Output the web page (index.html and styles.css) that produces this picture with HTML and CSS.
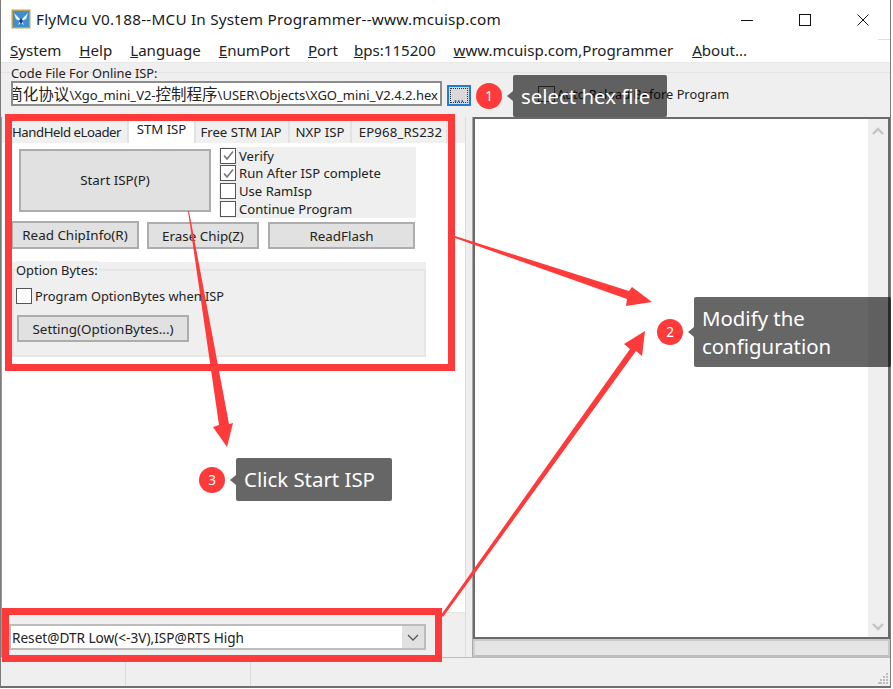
FILE: index.html
```html
<!DOCTYPE html>
<html lang="en">
<head>
<meta charset="utf-8">
<title>FlyMcu</title>
<link rel="stylesheet" href="styles.css">
</head>
<body>
<div class="window">
  <header class="titlebar">
    <svg class="app-icon" width="20" height="20" viewBox="0 0 20 20">
      <rect x="0.5" y="0.5" width="19" height="19" fill="#c4a052"/>
      <rect x="2" y="2" width="16" height="16" fill="#3d8fd0"/>
      <path d="M3 4 L10 11 L17 4 L15 10 L11 12 L13 16 L10 14 L7 16 L9 12 L5 10 Z" fill="#f2f7fb"/>
      <path d="M8 12 L10 9 L12 12 L10 15 Z" fill="#123c78"/>
    </svg>
    <span class="title-text">FlyMcu V0.188--MCU In System Programmer--www.mcuisp.com</span>
    <div class="win-buttons">
      <svg class="win-btn" width="12" height="12" viewBox="0 0 12 12"><path d="M0 6.5H12" stroke="#111" fill="none"/></svg>
      <svg class="win-btn" width="12" height="12" viewBox="0 0 12 12"><rect x="0.5" y="0.5" width="11" height="11" stroke="#111" fill="none"/></svg>
      <svg class="win-btn" width="12" height="12" viewBox="0 0 12 12"><path d="M0.5 0.5L11.5 11.5M11.5 0.5L0.5 11.5" stroke="#111" fill="none"/></svg>
    </div>
  </header>
  <nav class="menubar">
    <span class="m1"><u>S</u>ystem</span>
    <span class="m2"><u>H</u>elp</span>
    <span class="m3"><u>L</u>anguage</span>
    <span class="m4"><u>E</u>numPort</span>
    <span class="m5"><u>P</u>ort</span>
    <span class="m6"><u>b</u>ps:115200</span>
    <span class="m7"><u>w</u>ww.mcuisp.com,Programmer</span>
    <span class="m8"><u>A</u>bout...</span>
  </nav>
  <section class="filebar">
    <div class="file-label">Code File For Online ISP:</div>
    <div class="file-row">
      <div class="file-input"><span class="file-path"><span class="cjk">简化协议</span>\Xgo_mini_V2-<span class="cjk">控制程序</span>\USER\Objects\XGO_mini_V2.4.2.hex</span></div>
      <button class="browse"><span class="browse-inner">...</span></button>
      <span class="reload-box"></span>
      <span class="reload-text">Auto Reload Before Program</span>
    </div>
  </section>
  <main class="main">
    <section class="left">
      <div class="tabs">
        <span class="tab tab-a">HandHeld eLoader</span>
        <span class="tab tab-b active">STM ISP</span>
        <span class="tab tab-c">Free STM IAP</span>
        <span class="tab tab-d">NXP ISP</span>
        <span class="tab tab-e">EP968_RS232</span>
      </div>
      <div class="tab-body">
        <div class="start-row">
          <button class="btn start">Start ISP(P)</button>
          <div class="checks">
            <label class="check-row"><span class="box on"><svg width="13" height="13" viewBox="0 0 13 13"><path d="M2 6.5L5 10L11 2.5" fill="none" stroke="#777" stroke-width="1.6"/></svg></span>Verify</label>
            <label class="check-row"><span class="box on"><svg width="13" height="13" viewBox="0 0 13 13"><path d="M2 6.5L5 10L11 2.5" fill="none" stroke="#777" stroke-width="1.6"/></svg></span>Run After ISP complete</label>
            <label class="check-row"><span class="box"></span>Use RamIsp</label>
            <label class="check-row"><span class="box"></span>Continue Program</label>
          </div>
        </div>
        <div class="btn-row">
          <button class="btn read">Read ChipInfo(R)</button>
          <button class="btn erase">Erase Chip(Z)</button>
          <button class="btn flash">ReadFlash</button>
        </div>
        <fieldset class="options">
          <div class="options-title"><span class="options-label">Option Bytes:</span></div>
          <label class="check-row opt-check"><span class="box"></span>Program OptionBytes when ISP</label>
          <button class="btn setting">Setting(OptionBytes...)</button>
        </fieldset>
      </div>
      <div class="combo-bar">
        <div class="combo">
          <span class="combo-text">Reset@DTR Low(&lt;-3V),ISP@RTS High</span>
          <span class="combo-arrow"><svg width="12" height="7" viewBox="0 0 12 7"><path d="M1 1L6 6L11 1" fill="none" stroke="#555" stroke-width="1.3"/></svg></span>
        </div>
      </div>
    </section>
    <div class="splitter"></div>
    <section class="right">
      <div class="memo">
        <div class="memo-body"></div>
        <div class="scrollbar">
          <svg width="12" height="8" viewBox="0 0 12 8"><path d="M1 7L6 2L11 7" fill="none" stroke="#c4c4c4" stroke-width="2.4"/></svg>
          <svg width="12" height="8" viewBox="0 0 12 8"><path d="M1 1L6 6L11 1" fill="none" stroke="#c4c4c4" stroke-width="2.4"/></svg>
        </div>
      </div>
      <div class="hbar"></div>
    </section>
  </main>
  <footer class="status">
    <span class="cell c1"></span>
    <span class="cell c2"></span>
    <svg class="grip" width="12" height="12" viewBox="0 0 12 12" fill="#bdbdbd"><rect x="8" y="0" width="2" height="2"/><rect x="5" y="3" width="2" height="2"/><rect x="8" y="3" width="2" height="2"/><rect x="2" y="6" width="2" height="2"/><rect x="5" y="6" width="2" height="2"/><rect x="8" y="6" width="2" height="2"/><rect x="0" y="9" width="2" height="2"/><rect x="2" y="9" width="2" height="2"/><rect x="5" y="9" width="2" height="2"/><rect x="8" y="9" width="2" height="2"/></svg>
  </footer>
</div>

<svg class="arrows" width="893" height="689" viewBox="0 0 893 689">
  <g fill="#ff3a3a">
    <path d="M455 236 L629 291 L632 287 L652 302 L626 306 L627 299 L455 238 Z"/>
    <path d="M441 615 L630 349 L624 344 L645 331 L642 356 L636 351 L443 617 Z"/>
    <path d="M188 211 L189 211 L229 424 L233 423 L227 447 L213 427 L219 425 Z"/>
  </g>
</svg>

<div class="box-red box-config"></div>
<div class="box-red box-combo"></div>

<div class="note note1"><span class="num">1</span><span class="tip tip1">select hex file</span></div>
<div class="note note2"><span class="num">2</span><span class="tip tip2">Modify the configuration</span></div>
<div class="note note3"><span class="num">3</span><span class="tip tip3">Click Start ISP</span></div>
</body>
</html>
```
FILE: styles.css
```css
* { box-sizing: border-box; }
html, body { margin: 0; padding: 0; background: #fff; }
body { width: 893px; height: 689px; position: relative; overflow: hidden; font-family: "Noto Sans", "Noto Sans CJK SC", sans-serif; color: #222; }

.window { width: 891px; height: 688px; border: 1px solid #7a7a7a; border-top: 0; border-bottom: 2px solid #6f6f6f; display: flex; flex-direction: column; background: #efefef; }

.titlebar { height: 38px; background: #fff; display: flex; align-items: center; padding-left: 10px; flex: none; }
.app-icon { flex: none; margin-top: -1px; }
.title-text { margin-left: 5px; font-size: 15.3px; color: #1a1a1a; white-space: nowrap; letter-spacing: 0.2px; }
.win-buttons { margin-left: auto; display: flex; gap: 46px; padding-right: 21px; margin-top: 2px; }
.win-btn { display: block; }

.menubar { height: 24px; background: #fff; flex: none; display: flex; align-items: center; padding-left: 9px; font-size: 15.1px; color: #222; white-space: nowrap; position: relative; }
.menubar::after { content: ""; position: absolute; right: 0; top: 1px; width: 12px; height: 1px; background: #dedede; }
.menubar u { text-underline-offset: 1px; }
.m2, .m3, .m4, .m5, .m7 { margin-left: 18px; }
.m6 { margin-left: 16px; }
.m8 { margin-left: 19px; }

.filebar { height: 55px; flex: none; border-top: 1px solid #e8e8e8; padding: 2px 0 0 10px; background: #efefef; position: relative; }
.filebar::before { content: ""; position: absolute; left: 0; right: 0; top: 9px; height: 1px; background: #e4e4e4; }
.file-label { font-size: 12.8px; line-height: 16px; color: #222; position: relative; }
.file-row { display: flex; align-items: center; height: 25px; font-size: 12.8px; position: relative; }
.file-input { width: 431px; height: 25px; border: 2px solid #8c8c8c; background: #fff; overflow: hidden; display: flex; justify-content: flex-end; align-items: center; padding-right: 2px; flex: none; }
.file-path { white-space: nowrap; font-size: 13px; color: #222; flex: none; }
.cjk { font-size: 15.5px; }
.browse { margin: 4px 0 0 5px; align-self: flex-start; width: 24px; height: 21px; padding: 0; border: 2px solid #1d7fd3; background: #d9d9d9; flex: none; display: flex; }
.browse-inner { flex: 1; margin: 1px; border: 1px dotted #333; color: #2b3f8c; font: 700 10px/18px "Noto Sans", sans-serif; text-align: center; letter-spacing: 0.5px; }
.reload-box { margin-left: 67px; width: 17px; height: 16px; border: 1px solid #555; background: #efefef; flex: none; }
.reload-text { margin-left: 2px; white-space: nowrap; }

.main { flex: 1; min-height: 0; display: flex; }
.left { width: 464px; flex: none; display: flex; flex-direction: column; background: #efefef; border-left: 1px solid #9a9a9a; }
.tabs { display: flex; height: 26px; padding: 2px 0 0 9px; align-items: flex-end; background: #efefef; font-size: 13.2px; flex: none; }
.tab { height: 23px; line-height: 22px; text-align: center; white-space: nowrap; background: #f0f0f0; border: 1px solid #e2e2e2; border-bottom: 0; }
.tab.active { height: 25px; background: #fff; line-height: 21px; }
.tab-a { width: 117px; padding-right: 7px; letter-spacing: -0.45px; }
.tab-b { width: 67px; }
.tab-c { width: 94px; padding-right: 2px; }
.tab-d { width: 62px; }
.tab-e { width: 96px; padding-left: 3px; letter-spacing: 0.15px; }

.tab-body { flex: 1; min-height: 0; background: #fff; padding: 5px 0 0 10px; border-bottom: 1px solid #e4e4e4; }
.btn { font-family: inherit; font-size: 13.4px; color: #222; background: #e1e1e1; border: 2px solid #adadad; padding: 0; white-space: nowrap; display: block; }
.start-row { display: flex; height: 70px; }
.start { width: 192px; height: 63px; margin: 1px 0 0 7px; padding-bottom: 2px; flex: none; }
.checks { margin: -1px 0 0 8px; width: 197px; height: 71px; background: #efefef; font-size: 13.1px; }
.check-row { display: flex; align-items: center; height: 17.6px; white-space: nowrap; }
.box { width: 16px; height: 16px; border: 1px solid #555; background: #fff; margin-right: 3px; flex: none; display: flex; align-items: center; justify-content: center; }
.checks .box { margin-left: 1px; }
.btn-row { display: flex; margin-top: 3px; height: 28px; }
.read { width: 128px; height: 28px; margin-left: -1px; }
.erase { width: 112px; height: 27px; margin: 1px 0 0 8px; }
.flash { width: 147px; height: 27px; margin: 1px 0 0 9px; }
.options { margin: 13px 0 0 0; padding: 0; width: 414px; height: 95px; background: #efefef; border: 0; position: relative; }
.options-title { font-size: 12.9px; line-height: 16px; padding-left: 4px; position: relative; z-index: 1; }
.options-label { background: #efefef; }
.options::after { content: ""; position: absolute; left: 0; right: 0; top: 7px; bottom: 0; border: 2px solid #e6e6e6; pointer-events: none; }
.opt-check { font-size: 12.8px; margin: 10px 0 0 4px; height: 16px; position: relative; z-index: 1; }
.setting { width: 172px; height: 27px; margin: 11px 0 0 5px; position: relative; z-index: 1; }

.combo-bar { height: 44px; background: #efefef; flex: none; padding: 11px 0 0 7px; }
.combo { width: 417px; height: 26px; border: 2px solid #bcbcbc; background: #fff; display: flex; align-items: center; font-size: 13.6px; }
.combo-text { flex: 1; padding-left: 1px; white-space: nowrap; }
.combo-arrow { width: 22px; height: 100%; background: #e1e1e1; display: flex; align-items: center; justify-content: center; }

.splitter { width: 8px; flex: none; background: #efefef; border-left: 1px solid #dcdcdc; border-right: 1px solid #a9a9a9; }
.right { flex: 1; display: flex; flex-direction: column; min-width: 0; }
.memo { flex: 1; min-height: 0; display: flex; border: 2px solid #6a6a6a; background: #fff; }
.memo-body { flex: 1; }
.scrollbar { width: 20px; background: #efefef; display: flex; flex-direction: column; justify-content: space-between; align-items: center; padding: 8px 0 6px; }
.scrollbar svg { display: block; }
.hbar { height: 18px; flex: none; background: #e5e5e5; border: 2px solid #bdbdbd; border-top-color: #c9c9c9; border-left-color: #d0d0d0; border-right-color: #c9c9c9; }

.status { height: 29px; flex: none; display: flex; background: #efefef; border-top: 1px solid #bdbdbd; }
.cell { display: block; height: 100%; border-right: 1px solid #dcdcdc; flex: none; }
.c1 { width: 125px; }
.c2 { width: 125px; }
.grip { margin-left: auto; margin-top: 15px; }

.arrows { position: absolute; left: 0; top: 0; pointer-events: none; }
.box-red { position: absolute; border: 7px solid #ff3a3a; pointer-events: none; }
.box-config { left: 5px; top: 114px; width: 450px; height: 257px; }
.box-combo { left: 2px; top: 608px; width: 440px; height: 54px; }

.note { position: absolute; display: flex; align-items: center; }
.num { width: 26px; height: 26px; border-radius: 50%; background: #ff3a3a; color: #fff; font-size: 13.5px; line-height: 26px; text-align: center; flex: none; }
.tip { position: relative; background: rgba(0, 0, 0, 0.6); color: #fff; border-radius: 2px; margin-left: 11px; font-size: 20.4px; line-height: 28px; }
.tip::before { content: ""; position: absolute; left: -6px; top: 50%; margin-top: -5px; border-style: solid; border-width: 5px 6px 5px 0; border-color: transparent rgba(0, 0, 0, 0.6) transparent transparent; }
.note1 { left: 476px; top: 75px; }
.tip1 { width: 154px; height: 42px; padding: 7px 0 0 8px; }
.note2 { left: 657px; top: 297px; }
.tip2 { width: 197px; height: 70px; padding: 7px 8px; }
.note3 { left: 199px; top: 458px; }
.tip3 { width: 156px; height: 43px; padding: 7px 0 0 8px; }
```
